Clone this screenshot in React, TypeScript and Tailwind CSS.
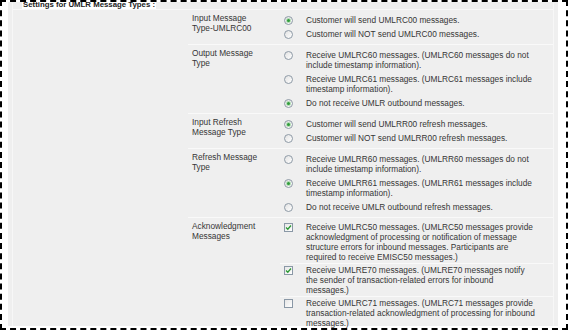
type Option = {
  lines: string[];
  checked: boolean;
};

type SettingRow = {
  label: string[];
  kind: "radio" | "checkbox";
  options: Option[];
};

const rows: SettingRow[] = [
  {
    label: ["Input Message", "Type-UMLRC00"],
    kind: "radio",
    options: [
      { lines: ["Customer will send UMLRC00 messages."], checked: true },
      { lines: ["Customer will NOT send UMLRC00 messages."], checked: false },
    ],
  },
  {
    label: ["Output Message", "Type"],
    kind: "radio",
    options: [
      {
        lines: ["Receive UMLRC60 messages. (UMLRC60 messages do not", "include timestamp information)."],
        checked: false,
      },
      {
        lines: ["Receive UMLRC61 messages. (UMLRC61 messages include", "timestamp information)."],
        checked: false,
      },
      { lines: ["Do not receive UMLR outbound messages."], checked: true },
    ],
  },
  {
    label: ["Input Refresh", "Message Type"],
    kind: "radio",
    options: [
      { lines: ["Customer will send UMLRR00 refresh messages."], checked: true },
      { lines: ["Customer will NOT send UMLRR00 refresh messages."], checked: false },
    ],
  },
  {
    label: ["Refresh Message", "Type"],
    kind: "radio",
    options: [
      {
        lines: ["Receive UMLRR60 messages. (UMLRR60 messages do not", "include timestamp information)."],
        checked: false,
      },
      {
        lines: ["Receive UMLRR61 messages. (UMLRR61 messages include", "timestamp information)."],
        checked: true,
      },
      { lines: ["Do not receive UMLR outbound refresh messages."], checked: false },
    ],
  },
  {
    label: ["Acknowledgment", "Messages"],
    kind: "checkbox",
    options: [
      {
        lines: [
          "Receive UMLRC50 messages. (UMLRC50 messages provide",
          "acknowledgment of processing or notification of message",
          "structure errors for inbound messages. Participants are",
          "required to receive EMISC50 messages.)",
        ],
        checked: true,
      },
      {
        lines: [
          "Receive UMLRE70 messages. (UMLRE70 messages notify",
          "the sender of transaction-related errors for inbound",
          "messages.)",
        ],
        checked: true,
      },
      {
        lines: [
          "Receive UMLRC71 messages. (UMLRC71 messages provide",
          "transaction-related acknowledgment of processing for inbound",
          "messages.)",
        ],
        checked: false,
      },
    ],
  },
];

function Radio({ checked }: { checked: boolean }) {
  return (
    <span className="mt-[1px] flex h-[9px] w-[9px] items-center justify-center rounded-full border border-[#8e9aa6] bg-gradient-to-br from-[#e2e2e2] to-white">
      {checked ? <span className="h-[3px] w-[3px] rounded-full bg-[#2f9a3a] shadow-[0_0_0_1px_#b2dcb5]" /> : null}
    </span>
  );
}

function Checkbox({ checked }: { checked: boolean }) {
  return (
    <span className="mt-[1px] flex h-[9px] w-[9px] items-center justify-center border border-[#8a98a6] bg-gradient-to-br from-[#e6e6e6] to-white">
      {checked ? (
        <svg width="7" height="7" viewBox="0 0 7 7">
          <polyline points="1,3.5 2.8,5.2 6,1.5" fill="none" stroke="#2c9a34" strokeWidth="1.3" />
        </svg>
      ) : null}
    </span>
  );
}

export default function App() {
  return (
    <div className="relative h-[330px] w-[568px] overflow-hidden border-2 border-dashed border-black bg-white font-['Liberation_Sans',Arial,sans-serif] text-[8.3px] text-[#363636]">
      <div className="absolute left-[20px] top-[-2px] bg-white px-[1px] text-[7.8px] font-bold leading-[9px] text-[#222]">
        Settings for UMLR Message Types :
      </div>
      <div className="ml-[6px] mr-[8px] h-[324px] bg-[#efefef] px-[4px] pt-[1px]">
        <div className="flex h-full border-x border-[#f7f7f7]">
          <div className="w-[175px] shrink-0 pt-[6px]">
            <div className="border-t border-[#f9f9f9]" />
          </div>
          <div className="min-w-0 flex-1 pt-[6px]">
            {rows.map((row) => (
              <div key={row.label.join(" ")} className="flex border-t border-[#f9f9f9] py-[3px]">
                <div className="w-[92px] shrink-0 pl-[4px] leading-[10px]">
                  {row.label.map((line) => (
                    <div key={line}>{line}</div>
                  ))}
                </div>
                <div className="min-w-0 flex-1">
                  {row.options.map((option, index) => (
                    <div
                      key={option.lines[0]}
                      className={
                        row.kind === "checkbox"
                          ? index > 0
                            ? "flex border-t border-[#f9f9f9] py-[1px]"
                            : "flex py-[1px]"
                          : "flex py-[2px]"
                      }
                    >
                      <div className="w-[26px] shrink-0 pl-[4px]">
                        {row.kind === "radio" ? <Radio checked={option.checked} /> : <Checkbox checked={option.checked} />}
                      </div>
                      <div className="whitespace-nowrap leading-[10px]">
                        {option.lines.map((line) => (
                          <div key={line}>{line}</div>
                        ))}
                      </div>
                    </div>
                  ))}
                </div>
              </div>
            ))}
          </div>
        </div>
      </div>
    </div>
  );
}
